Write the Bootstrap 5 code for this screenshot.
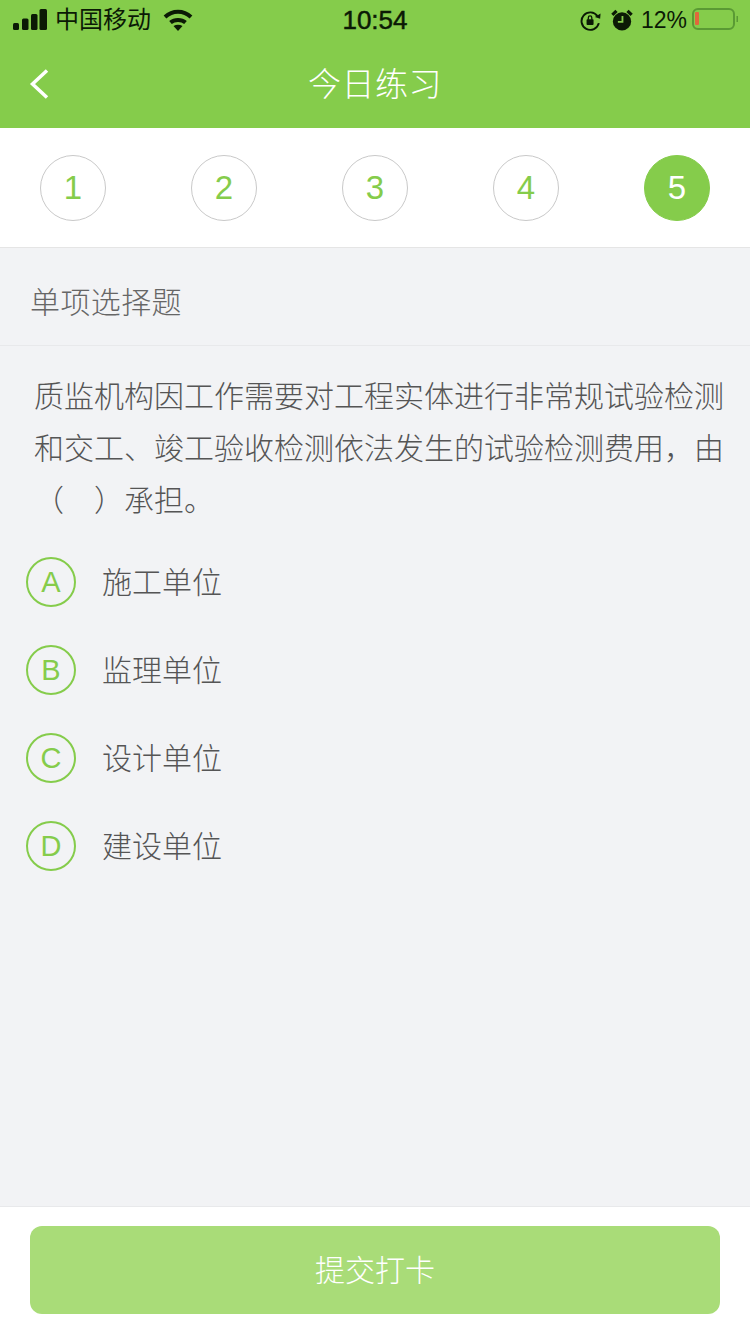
<!DOCTYPE html>
<html lang="zh">
<head>
<meta charset="utf-8">
<title>今日练习</title>
<link rel="stylesheet" href="https://cdn.jsdelivr.net/npm/bootstrap@5.3.0/dist/css/bootstrap.min.css">
<style>
html,body{height:1334px;overflow:hidden}
body{font-family:"Liberation Sans","Noto Sans CJK SC",sans-serif;background:#f2f3f5;color:#666}
.app-shell{height:1334px}
.top-area{background:#85cc4b}
.status-row{height:40px;padding:0 12px 0 13px;color:#0b1a05;font-size:24px;position:relative}
.status-pct{font-size:23px}
.rot-icon{margin-right:10px}
.clock{position:absolute;left:0;right:0;top:0;line-height:40px;text-align:center;font-size:26px;-webkit-text-stroke:.5px #0b1a05}
.title-row{height:88px;position:relative}
.title-text{font-size:33px;font-weight:300;color:#fff;width:100%;text-align:center;line-height:90px;letter-spacing:.5px}
.back-link{position:absolute;left:29px;top:29px;line-height:0}
.step-row{height:120px;padding:0 40px;border-bottom:1px solid #e5e5e5}
.step-dot{width:66px;height:66px;border:1px solid #c9c9c9;color:#85cc4b;font-size:33px;font-weight:300}
.step-on{background:#85cc4b;border-color:#85cc4b;color:#fff}
.kind-row{height:98px;padding:12px 30px 0;border-bottom:1px solid #e8e9eb;font-size:30px;font-weight:300;letter-spacing:.4px;color:#666}
.stem{padding:25px 20px 0 34px;font-size:30px;font-weight:300;line-height:52px;color:#555}
.choice-list{padding:12px 0 0 26px;margin-top:-1px}
.choice{height:88px;gap:26px;font-size:30px;font-weight:300;color:#555}
.choice-mark{width:50px;height:50px;border:2px solid #85cc4b;color:#85cc4b;font-size:29px;flex:none;padding-top:2px}
.foot{height:128px;padding:19px 30px 0;border-top:1px solid #e8e9eb}
.submit{height:88px;background:#a9dc78;border:0;border-radius:12px;color:#fff;font-size:30px;font-weight:300}
.submit:hover{background:#a9dc78;color:#fff}
</style>
</head>
<body>
<div class="app-shell d-flex flex-column">
  <header class="top-area">
    <div class="status-row d-flex align-items-center justify-content-between">
      <div class="d-flex align-items-center gap-2">
        <svg width="34" height="22" viewBox="0 0 34 22" aria-hidden="true" fill="currentColor"><rect x="0" y="14" width="6" height="7" rx="1.5"/><rect x="9" y="9.500" width="6.500" height="11.500" rx="1.500"/><rect x="18" y="5" width="6.500" height="16" rx="1.500"/><rect x="26.500" y="0" width="7.500" height="21" rx="1.500"/></svg>
        <span>中国移动</span>
        <svg class="ms-1" width="30" height="22" viewBox="0 0 30 22" aria-hidden="true" fill="none" stroke="currentColor" stroke-width="4"><path d="M2 8C9.500 1 20.500 1 28 8"/><path d="M7.500 13.500C11.500 10 18.500 10 22.500 13.500"/><path d="M15 22l-4.500-5c2.800-1.800 6.200-1.800 9 0z" fill="currentColor" stroke="none"/></svg>
      </div>
      <div class="clock">10:54</div>
      <div class="d-flex align-items-center">
        <svg class="rot-icon" width="21" height="21" viewBox="0 0 24 24" aria-hidden="true" fill="none" stroke="currentColor" stroke-width="2.200"><path d="M20 7A10 10 0 1 0 21.500 15"/><path d="M17 8l6 2 .5-6z" fill="currentColor" stroke="none"/><rect x="7.500" y="10.500" width="8" height="6.500" rx="1" fill="currentColor" stroke="none"/><path d="M9.500 11V8.800a2 2 0 0 1 4 0V11" stroke-width="1.500"/></svg>
        <svg width="22" height="24" viewBox="0 0 24 24" aria-hidden="true"><circle cx="12" cy="13.500" r="10" fill="currentColor"/><path d="M12.500 7.500v6.500H7.500" stroke="#85cc4b" stroke-width="2" fill="none"/><path d="M1.500 6.500L6 2M22.500 6.500L18 2" stroke="currentColor" stroke-width="3.500"/></svg>
        <span class="status-pct ms-2">12%</span>
        <svg class="ms-1" width="47" height="24" viewBox="0 0 47 24" aria-hidden="true"><rect x="2" y="1" width="41" height="20" rx="5" fill="none" stroke="#5a9a34" stroke-width="2"/><rect x="4" y="4" width="4" height="13" rx="1" fill="#e0683c"/><rect x="45.500" y="8" width="1.500" height="6" fill="#5a9a34"/></svg>
      </div>
    </div>
    <div class="title-row">
      <a class="back-link" href="#" aria-label="返回"><svg width="21" height="30" viewBox="0 0 21 30" fill="none" stroke="#fff" stroke-width="3.500"><path d="M18 1.500L3.500 15 18 28.500"/></svg></a>
      <div class="title-text">今日练习</div>
    </div>
  </header>

  <nav class="step-row bg-white d-flex align-items-center justify-content-between">
    <div class="step-dot rounded-circle d-flex align-items-center justify-content-center">1</div>
    <div class="step-dot rounded-circle d-flex align-items-center justify-content-center">2</div>
    <div class="step-dot rounded-circle d-flex align-items-center justify-content-center">3</div>
    <div class="step-dot rounded-circle d-flex align-items-center justify-content-center">4</div>
    <div class="step-dot step-on rounded-circle d-flex align-items-center justify-content-center">5</div>
  </nav>

  <main class="flex-grow-1">
    <div class="kind-row d-flex align-items-center">单项选择题</div>
    <p class="stem mb-0">质监机构因工作需要对工程实体进行非常规试验检测和交工、竣工验收检测依法发生的试验检测费用，由（　）承担。</p>
    <div class="choice-list">
      <div class="choice d-flex align-items-center"><span class="choice-mark rounded-circle d-flex align-items-center justify-content-center">A</span><span>施工单位</span></div>
      <div class="choice d-flex align-items-center"><span class="choice-mark rounded-circle d-flex align-items-center justify-content-center">B</span><span>监理单位</span></div>
      <div class="choice d-flex align-items-center"><span class="choice-mark rounded-circle d-flex align-items-center justify-content-center">C</span><span>设计单位</span></div>
      <div class="choice d-flex align-items-center"><span class="choice-mark rounded-circle d-flex align-items-center justify-content-center">D</span><span>建设单位</span></div>
    </div>
  </main>

  <footer class="foot bg-white">
    <button type="button" class="submit btn w-100">提交打卡</button>
  </footer>
</div>
<script src="https://cdn.jsdelivr.net/npm/bootstrap@5.3.0/dist/js/bootstrap.bundle.min.js"></script>
</body>
</html>
